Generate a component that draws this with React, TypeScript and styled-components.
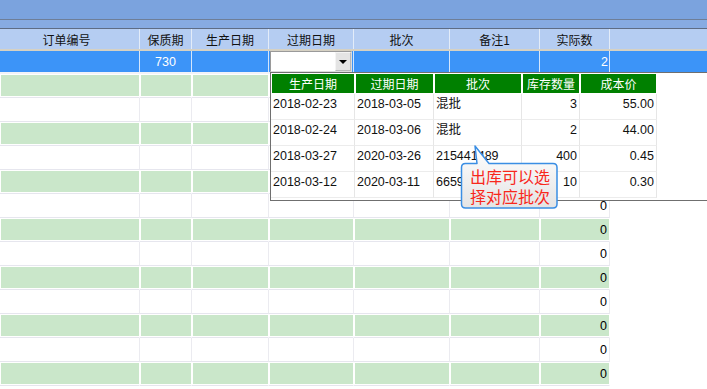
import React from 'react';
import styled, { createGlobalStyle } from 'styled-components';

const GlobalStyle = createGlobalStyle`
  html, body { margin: 0; padding: 0; background: #fff; }
  body { font-family: "Liberation Sans", "Noto Sans CJK SC", sans-serif; }
  * { box-sizing: border-box; }
`;

const COLS = '140px 52px 77px 85px 96px 90px 70px 1fr';

const Page = styled.div`
  position: relative;
  width: 707px;
  height: 389px;
  overflow: hidden;
  background: #fff;
  font-family: "Liberation Sans", "Noto Sans CJK SC", sans-serif;
  font-size: 12px;
  color: #000;
`;

const TopBar = styled.div`
  height: 20px;
  background: #7ba3de;
  border-bottom: 1px solid #6e7e98;
`;

const SubBar = styled.div`
  height: 9px;
  background: #87abe2;
  border-bottom: 1px solid #5e6c84;
`;

const HeaderRow = styled.div`
  display: grid;
  grid-template-columns: ${COLS};
  height: 22px;
  background: #b5cdf2;
  border-bottom: 2px solid #d6d1c3;
`;

const HeaderCell = styled.div<{ $pr?: number }>`
  display: flex;
  align-items: center;
  justify-content: center;
  padding-right: ${p => p.$pr ?? 0}px;
  border-right: 1px solid #e3ecf9;
  font-family: "Noto Sans CJK SC", sans-serif;
  font-size: 12px;
  color: #111;
  &:last-child { border-right: none; }
`;

const SelRow = styled.div`
  display: grid;
  grid-template-columns: ${COLS};
  height: 23px;
  background: #3c94f8;
  border-bottom: 2px solid #f2f3f7;
`;

const SelCell = styled.div<{ $align?: 'left' | 'center' | 'right' }>`
  display: flex;
  align-items: center;
  justify-content: ${p => (p.$align === 'right' ? 'flex-end' : p.$align === 'center' ? 'center' : 'flex-start')};
  padding: 0 1px 0 1px;
  border-right: 1px solid #d4e6fc;
  color: #fff;
  font-size: 12.5px;
  &:last-child { border-right: none; }
`;

const Combo = styled.div`
  display: flex;
  width: 83px;
  height: 21px;
  background: #fff;
  border: 1px solid #9a9a9a;
  border-right-color: #dcdcdc;
  border-bottom-color: #dcdcdc;
`;

const ComboInput = styled.div`
  flex: 1;
`;

const ComboBtn = styled.div`
  width: 16px;
  background: #e4e4e4;
  border: 1px solid #b8b8b8;
  border-top-color: #f4f4f4;
  border-left-color: #f4f4f4;
  display: flex;
  align-items: center;
  justify-content: center;
`;

const Arrow = styled.div`
  width: 0;
  height: 0;
  border-left: 4px solid transparent;
  border-right: 4px solid transparent;
  border-top: 4px solid #000;
`;

const DataRow = styled.div`
  display: grid;
  grid-template-columns: ${COLS};
  height: 24px;
`;

const DataCell = styled.div<{ $green: boolean }>`
  display: flex;
  align-items: center;
  justify-content: flex-end;
  padding-right: 2px;
  font-size: 12.5px;
  background: ${p => (p.$green ? '#cae7ca' : '#fff')};
  border-right: 1px solid ${p => (p.$green ? '#fff' : '#ebebf0')};
  border-bottom: 1px solid #e6e6ee;
  box-shadow: ${p => (p.$green ? 'inset 1px 1px 0 #fff, inset 0 -1px 0 #fff' : 'none')};
`;

const BlankCell = styled.div`
  background: #fff;
`;

const Popup = styled.div`
  position: absolute;
  left: 270px;
  top: 72px;
  width: 460px;
  height: 129px;
  background: #fff;
  border: 1px solid #6f6f6f;
  border-right: none;
`;

const PopGrid = styled.div`
  display: grid;
  grid-template-columns: 84px 79px 88px 58px 77px;
  grid-auto-rows: 26px;
  grid-template-rows: 21px;
  width: 386px;
`;

const PopHead = styled.div`
  display: flex;
  align-items: center;
  justify-content: center;
  background: #008000;
  box-shadow: inset 0 0 0 1px #fff;
  color: #fff;
  font-family: "Noto Sans CJK SC", sans-serif;
  font-size: 12px;
`;

const PopCell = styled.div<{ $right?: boolean }>`
  display: flex;
  align-items: flex-start;
  justify-content: ${p => (p.$right ? 'flex-end' : 'flex-start')};
  padding: 2px 2px 0 2px;
  line-height: 16px;
  font-size: 12.5px;
  color: #111;
  border-right: 1px solid #e6e6e6;
  border-bottom: 1px solid #ececec;
`;

const Tip = styled.div`
  position: absolute;
  left: 458px;
  top: 143px;
  width: 102px;
  height: 68px;
`;

const TipSvg = styled.svg`
  position: absolute;
  left: 0;
  top: 0;
`;

const TipText = styled.div`
  position: relative;
  padding: 23px 0 0 12px;
  font-family: "Noto Sans CJK SC", sans-serif;
  font-size: 16px;
  line-height: 20px;
  color: #f8281c;
`;

const headers = ['订单编号', '保质期', '生产日期', '过期日期', '批次', '备注1', '实际数', ''];

const stock = [
  ['2018-02-23', '2018-03-05', '混批', '3', '55.00'],
  ['2018-02-24', '2018-03-06', '混批', '2', '44.00'],
  ['2018-03-27', '2020-03-26', '215441489', '400', '0.45'],
  ['2018-03-12', '2020-03-11', '6659101088', '10', '0.30'],
];

const popHeads = ['生产日期', '过期日期', '批次', '库存数量', '成本价'];

export default function App() {
  const rows = Array.from({ length: 13 }, (_, i) => i + 1);
  return (
    <Page>
      <GlobalStyle />
      <TopBar />
      <SubBar />
      <HeaderRow>
        {headers.map((h, i) => (
          <HeaderCell key={i} $pr={i === 0 ? 6 : 0}>{h}</HeaderCell>
        ))}
      </HeaderRow>
      <SelRow>
        <SelCell />
        <SelCell $align="center">730</SelCell>
        <SelCell />
        <SelCell>
          <Combo>
            <ComboInput />
            <ComboBtn><Arrow /></ComboBtn>
          </Combo>
        </SelCell>
        <SelCell />
        <SelCell />
        <SelCell $align="right">2</SelCell>
        <SelCell />
      </SelRow>
      {rows.map(r => {
        const green = r % 2 === 1;
        return (
          <DataRow key={r}>
            {[0, 1, 2, 3, 4, 5].map(c => (
              <DataCell key={c} $green={green} />
            ))}
            <DataCell $green={green}>0</DataCell>
            <BlankCell />
          </DataRow>
        );
      })}
      <Popup>
        <PopGrid>
          {popHeads.map(h => (
            <PopHead key={h}>{h}</PopHead>
          ))}
          {stock.map((s, i) => (
            <React.Fragment key={i}>
              <PopCell>{s[0]}</PopCell>
              <PopCell>{s[1]}</PopCell>
              <PopCell>{s[2]}</PopCell>
              <PopCell $right>{s[3]}</PopCell>
              <PopCell $right>{s[4]}</PopCell>
            </React.Fragment>
          ))}
        </PopGrid>
      </Popup>
      <Tip>
        <TipSvg width="102" height="68" viewBox="0 0 102 68">
          <defs>
            <linearGradient id="tipbg" x1="0" y1="0" x2="0" y2="1">
              <stop offset="0" stopColor="#ffffff" />
              <stop offset="1" stopColor="#e4e4e4" />
            </linearGradient>
          </defs>
          <path
            d="M7.5 20.5 L19 20.5 L17 3 L31 20.5 L95 20.5 Q99 20.5 99 24.5 L99 61 Q99 65 95 65 L7.5 65 Q3.5 65 3.5 61 L3.5 24.5 Q3.5 20.5 7.5 20.5 Z"
            fill="url(#tipbg)"
            stroke="#3a8ee4"
            strokeWidth="1.5"
            strokeLinejoin="round"
          />
        </TipSvg>
        <TipText>
          出库可以选
          <br />
          择对应批次
        </TipText>
      </Tip>
    </Page>
  );
}
